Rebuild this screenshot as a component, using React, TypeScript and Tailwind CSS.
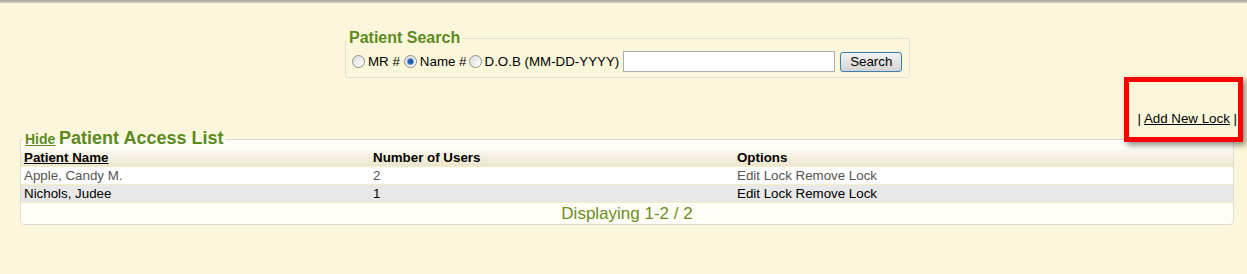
import React from "react";

const rows = [
  { name: "Apple, Candy M.", users: "2", alt: false },
  { name: "Nichols, Judee", users: "1", alt: true },
];

function Radio({ checked }: { checked?: boolean }) {
  return (
    <span className="inline-flex w-[13px] h-[13px] rounded-full border border-[#8e8f8f] bg-gradient-to-br from-[#dcdcdc] to-[#ffffff] items-center justify-center mr-[3px]">
      {checked && <span className="w-[5px] h-[5px] rounded-full bg-[#1d5fa8] ring-1 ring-[#6aa0d8]" />}
    </span>
  );
}

export default function App() {
  return (
    <div
      className="relative w-[1247px] h-[274px] bg-[#fcf7da] text-[13.33px] text-black overflow-hidden"
      style={{ fontFamily: '"Liberation Sans", Arial, sans-serif' }}
    >
      <div className="h-[3px] bg-gradient-to-b from-[#9e9e9a] to-[#d9d6c0]" />

      <fieldset className="ml-[345px] mt-[26px] w-[565px] border border-[#e2e0d2] rounded-[3px] pt-[3px] pb-[4px] pl-[6px]">
        <legend className="ml-[-6px] px-[3px] text-[16px] font-bold text-[#5b8a1f] leading-[18px]">
          Patient Search
        </legend>
        <div className="flex items-center h-[23px]">
          <Radio />
          <span>MR #</span>
          <span className="ml-[4px]" />
          <Radio checked />
          <span>Name #</span>
          <span className="ml-[2px]" />
          <Radio />
          <span>D.O.B (MM-DD-YYYY)</span>
          <input className="ml-[4px] w-[212px] h-[21px] border border-[#abadb3] bg-white outline-none" />
          <button className="ml-[5px] w-[62px] h-[20px] rounded-[3px] border border-[#3c7fb1] bg-gradient-to-b from-[#f2f2f2] to-[#d4d4d4] text-[13.33px] leading-none">
            Search
          </button>
        </div>
      </fieldset>

      <div className="flex justify-end pr-[10px] mt-[33px] h-[16px] leading-[16px]">
        <span>
          | <a className="underline text-black">Add New Lock</a> |
        </span>
      </div>

      <fieldset className="ml-[20px] mt-[1px] w-[1214px] border border-[#dddcd0] rounded-b-[4px] bg-[#fffdf6]">
        <legend className="ml-[2px] px-[2px] text-[#5b8a1f] font-bold leading-[20px]">
          <a className="underline text-[14px]">Hide</a>{" "}
          <span className="text-[18px]">Patient Access List</span>
        </legend>
        <div className="grid grid-cols-[349px_364px_1fr] h-[16px] leading-[16px] font-bold bg-gradient-to-b from-[#fbf9f0] to-[#ece6cc] pl-[3px]">
          <span className="underline">Patient Name</span>
          <span>Number of Users</span>
          <span>Options</span>
        </div>
        {rows.map((r) => (
          <div
            key={r.name}
            className={
              "grid grid-cols-[349px_364px_1fr] h-[18px] leading-[18px] pl-[3px] border-t border-[#f3eec4] " +
              (r.alt ? "bg-[#e8e8e8] text-black" : "bg-white text-[#555555]")
            }
          >
            <span>{r.name}</span>
            <span>{r.users}</span>
            <span>Edit Lock Remove Lock</span>
          </div>
        ))}
        <div className="border-t border-[#f3eec4] h-[22px] leading-[22px] text-center text-[17px] text-[#6b8e23]">
          Displaying 1-2 / 2
        </div>
      </fieldset>

      <div className="absolute left-[1124px] top-[77px] w-[119px] h-[65px] border-[5px] border-[#ff0000] shadow-[3px_3px_6px_rgba(0,0,0,0.45)]" />
    </div>
  );
}
